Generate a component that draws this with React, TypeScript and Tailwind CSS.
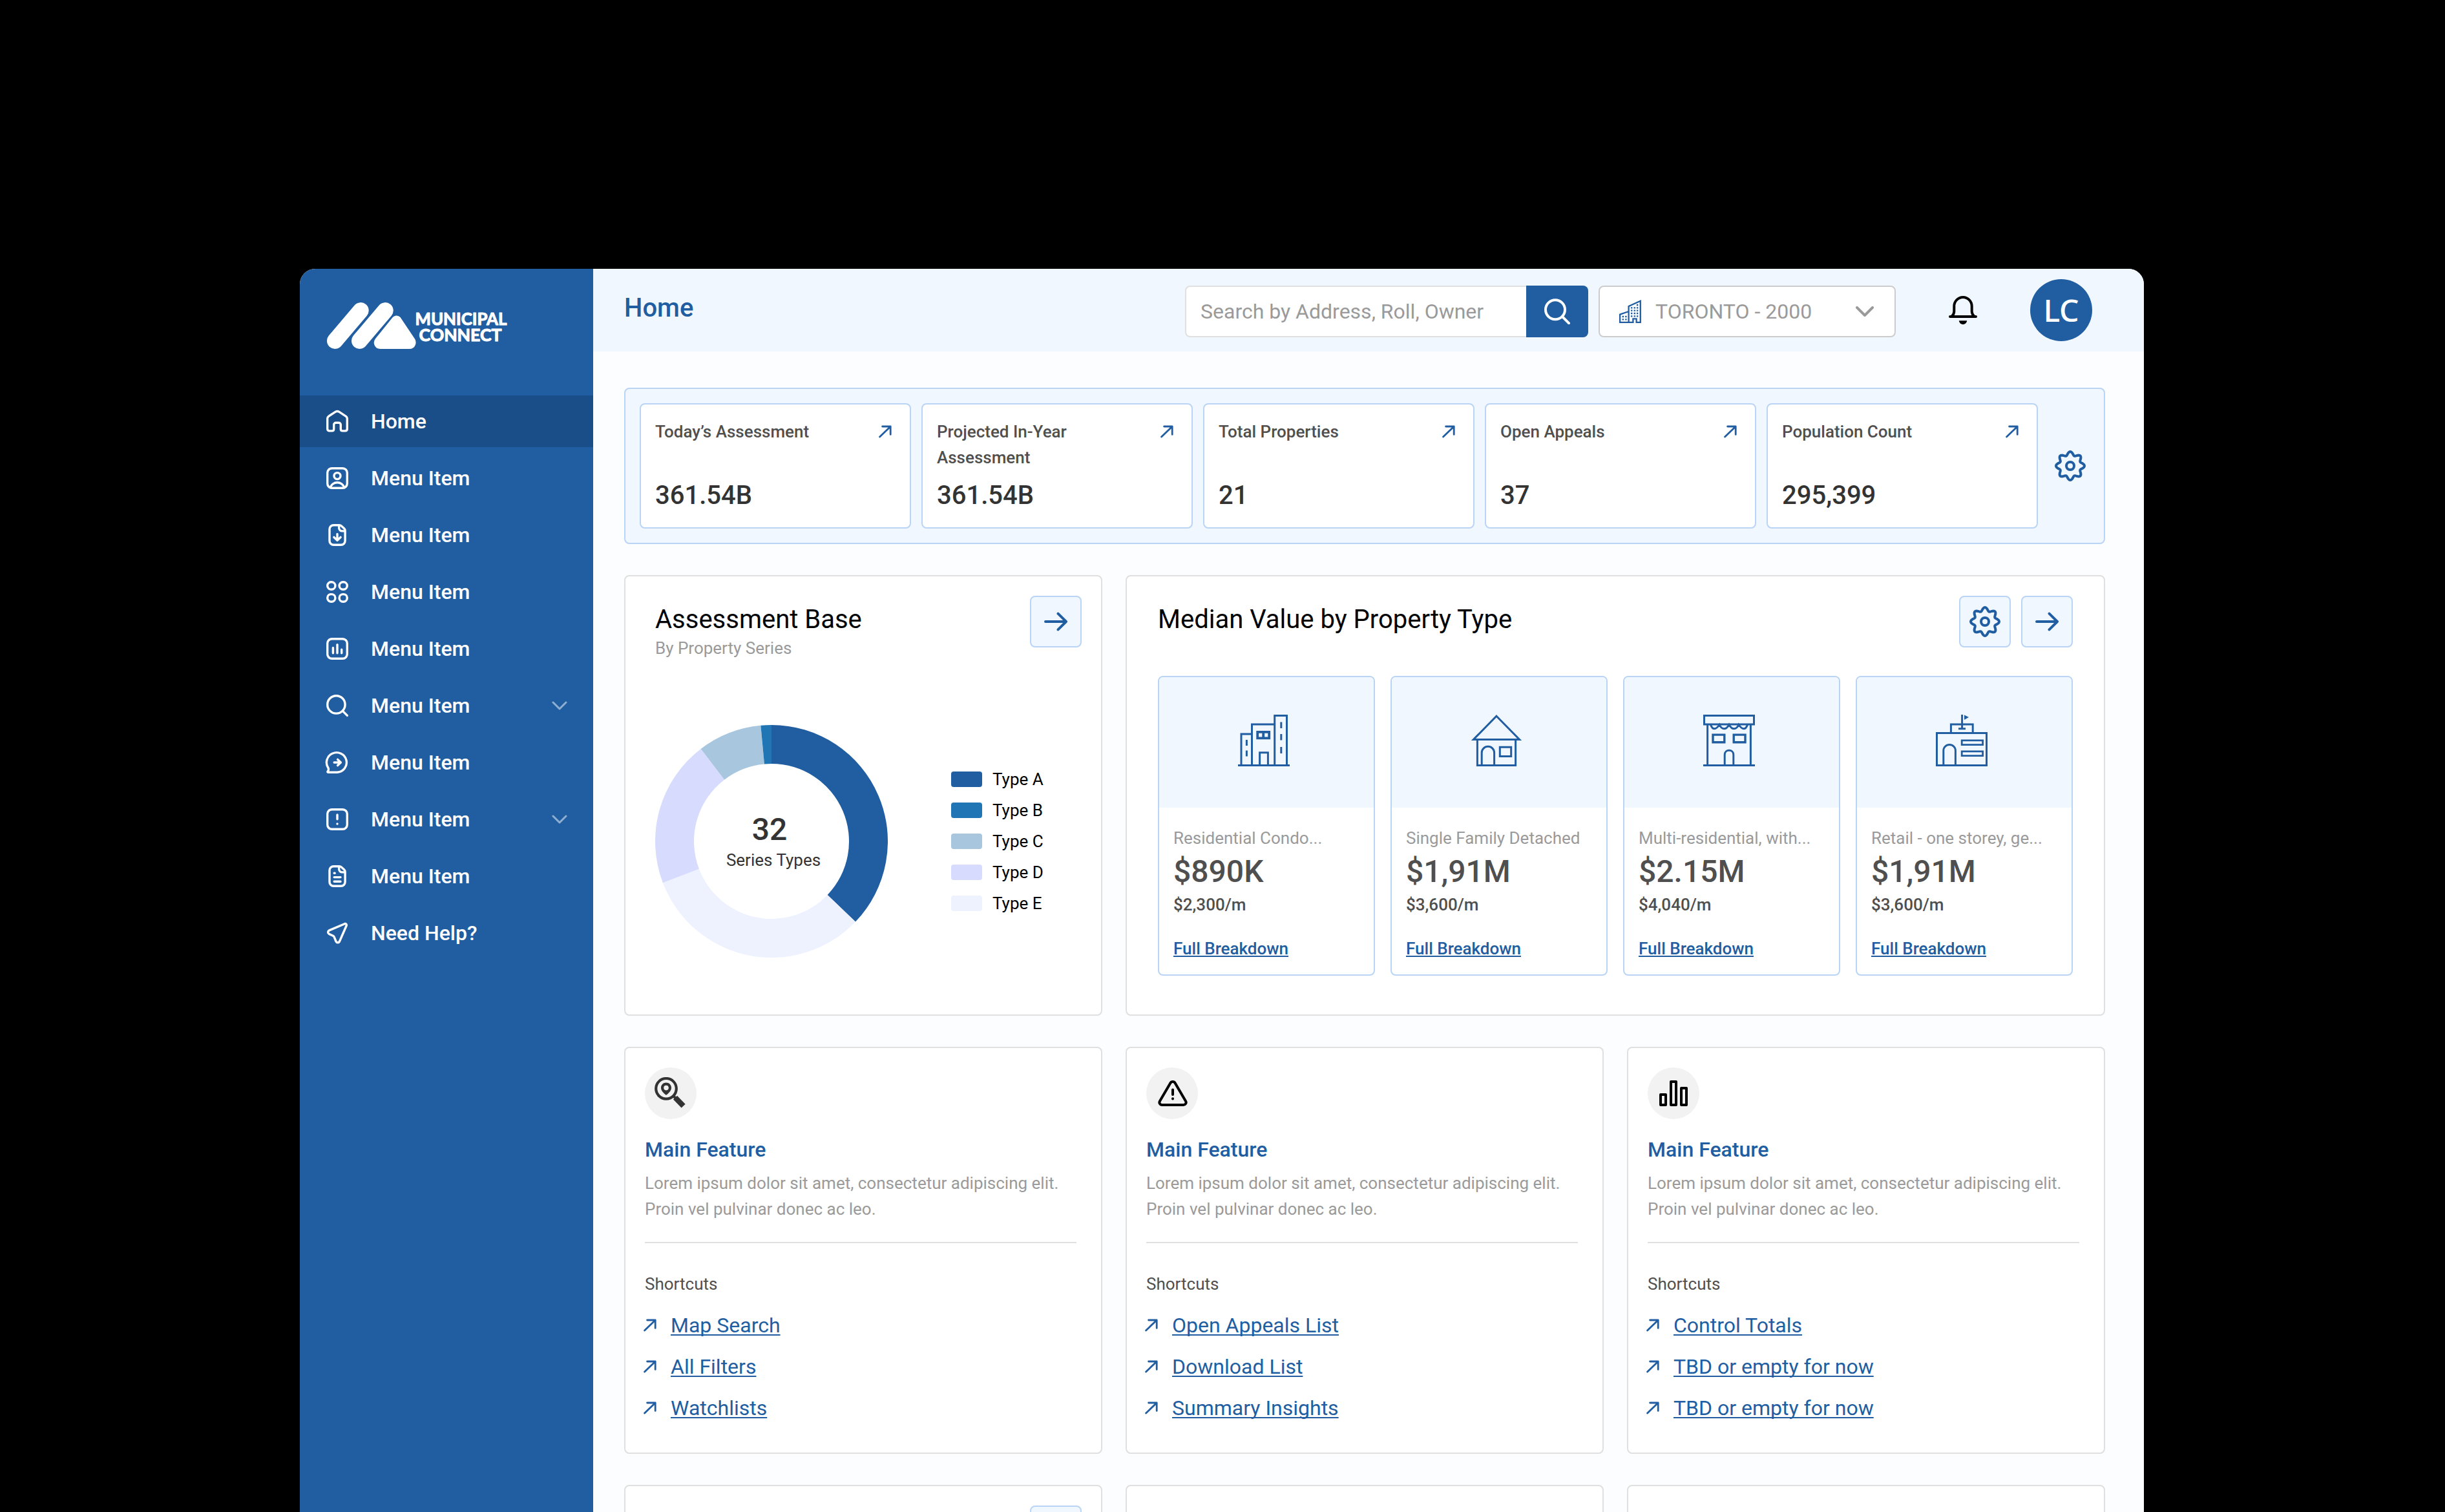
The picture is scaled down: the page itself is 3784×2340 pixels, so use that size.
import type { ReactNode } from 'react';
import { clsx } from 'clsx';

interface MenuEntry {
  label: string;
  icon: ReactNode;
  active?: boolean;
  expandable?: boolean;
}

interface Stat {
  label: string;
  value: string;
}

interface PropertyType {
  label: string;
  value: string;
  perMonth: string;
  icon: ReactNode;
}

interface Feature {
  icon: ReactNode;
  shortcuts: string[];
}

function MenuIcon({ children }: { children: ReactNode }) {
  return (
    <svg className="w-10 h-10 shrink-0" viewBox="0 0 40 40" fill="none" stroke="currentColor" strokeWidth="3.4" strokeLinecap="round" strokeLinejoin="round">
      {children}
    </svg>
  );
}

const FILE_OUTLINE = 'M14.3 4.7h8.6c1.4 0 2.5.4 3.5 1.3l4.1 3.8c1 1 1.6 2.1 1.6 3.4V29c0 3.5-2.8 6.3-6.3 6.3H14.3C10.8 35.3 8 32.5 8 29V11c0-3.5 2.8-6.3 6.3-6.3z';

const menu: MenuEntry[] = [
  {
    label: 'Home',
    active: true,
    icon: (
      <path d="M4.7 15.8c0-1.4.7-2.7 1.8-3.5l10.6-6.9c1.8-1.1 4-1.1 5.8 0l10.6 6.9c1.1.8 1.8 2.1 1.8 3.5v16c0 1.8-1.3 3.1-3.1 3.1h-4c-1.7 0-2.9-1.2-2.9-2.9v-6.7c0-1.7-1.3-3-3-3h-4.6c-1.7 0-3 1.3-3 3V32c0 1.7-1.2 2.9-2.9 2.9h-4c-1.8 0-3.1-1.3-3.1-3.1z" />
    ),
  },
  {
    label: 'Menu Item',
    icon: (
      <>
        <rect x="4.7" y="4.7" width="30.6" height="30.6" rx="7" />
        <circle cx="20" cy="16.6" r="5" />
        <path d="M9.2 34.4c1.6-4.6 5.8-7.7 10.8-7.7s9.2 3.1 10.8 7.7" />
      </>
    ),
  },
  {
    label: 'Menu Item',
    icon: (
      <>
        <path d={FILE_OUTLINE} />
        <path d="M22.6 5.2v3.6c0 2.9 2.2 5.1 5.1 5.1h4" />
        <path d="M20 18.4v9.4M14.9 23.4l5.1 4.8 5.1-4.8" />
      </>
    ),
  },
  {
    label: 'Menu Item',
    icon: (
      <>
        <rect x="4.7" y="4.7" width="12.2" height="11.6" rx="5.8" />
        <rect x="23.1" y="4.7" width="12.2" height="11.6" rx="5.8" />
        <rect x="4.7" y="23.6" width="12.2" height="11.6" rx="5.8" />
        <rect x="23.1" y="23.6" width="12.2" height="11.6" rx="5.8" />
      </>
    ),
  },
  {
    label: 'Menu Item',
    icon: (
      <>
        <rect x="4.7" y="4.7" width="30.6" height="30.6" rx="7" />
        <path d="M13.4 18.4v8.4M20 13.6v13.2M26.7 21.3v5.5" />
      </>
    ),
  },
  {
    label: 'Menu Item',
    expandable: true,
    icon: (
      <>
        <circle cx="18.4" cy="18.4" r="13.7" />
        <path d="M28.4 28.4l7 7" />
      </>
    ),
  },
  {
    label: 'Menu Item',
    icon: (
      <>
        <path d="M20 35.3H5.7c-.7 0-1-.7-.6-1.2 1.5-1.8 1.9-3.2.9-5.6A15.5 15.3 0 1 1 20 35.3z" />
        <path d="M15.2 20h9.8M20.6 15.4l4.8 4.6-4.8 4.6" />
      </>
    ),
  },
  {
    label: 'Menu Item',
    expandable: true,
    icon: (
      <>
        <rect x="4.7" y="4.7" width="30.6" height="30.6" rx="7" />
        <path d="M20 13v6.8M20 26.9v.1" />
      </>
    ),
  },
  {
    label: 'Menu Item',
    icon: (
      <>
        <path d={FILE_OUTLINE} />
        <path d="M22.6 5.2v3.6c0 2.9 2.2 5.1 5.1 5.1h4" />
        <path d="M15.2 15.2h1M15.2 21.6h9.8M15.2 28.2h9.8" />
      </>
    ),
  },
  {
    label: 'Need Help?',
    icon: (
      <path d="M31.4 5.7L7.5 15.9c-2.4 1-2.5 4.3-.1 5.5l6 2.9c.8.4 1.4 1 1.8 1.8l2.8 6.9c1.1 2.4 4.5 2.4 5.5-.1L34.2 8.5c.7-1.8-1-3.5-2.8-2.8z" />
    ),
  },
];

const stats: Stat[] = [
  { label: 'Today’s Assessment', value: '361.54B' },
  { label: 'Projected In-Year Assessment', value: '361.54B' },
  { label: 'Total Properties', value: '21' },
  { label: 'Open Appeals', value: '37' },
  { label: 'Population Count', value: '295,399' },
];

// Slices run clockwise from the top, angles in degrees
const slices = [
  { color: '#215ea1', from: 0, to: 133.8 },
  { color: '#eef2fe', from: 133.8, to: 249.1 },
  { color: '#d7dcff', from: 249.1, to: 322.6 },
  { color: '#a8c6de', from: 322.6, to: 354.7 },
  { color: '#2076b4', from: 354.7, to: 360 },
];

const legend = [
  { label: 'Type A', swatch: 'bg-[#215ea1]' },
  { label: 'Type B', swatch: 'bg-[#2076b4]' },
  { label: 'Type C', swatch: 'bg-[#a8c6de]' },
  { label: 'Type D', swatch: 'bg-[#d7dcff]' },
  { label: 'Type E', swatch: 'bg-[#eef2fe]' },
];

const propertyTypes: PropertyType[] = [
  {
    label: 'Residential Condo...',
    value: '$890K',
    perMonth: '$2,300/m',
    icon: (
      <>
        <path d="M0 78.5h80M5 78.5V30h16.5M21.5 78.5V15h35M56.7 78.5v-77h18.8v77" />
        <path d="M13.4 39v9M13.4 55.5v9M66.8 11.5v9.5M66.8 30v9.5M66.8 50v10" />
        <path d="M30.2 26.8h18v9.6h-18zM39.2 26.8v9.6" strokeWidth="3.8" />
        <path d="M33.6 78.5V58.8h12.8v19.7" />
      </>
    ),
  },
  {
    label: 'Single Family Detached',
    value: '$1,91M',
    perMonth: '$3,600/m',
    icon: (
      <>
        <path d="M40 2.2L75.6 38.5H4.4zM10.4 38.5v40h59.2v-40" />
        <path d="M17.2 78.5V59c0-5.4 4.3-9.7 9.7-9.7s9.7 4.3 9.7 9.7v19.5" />
        <path d="M45.3 50.3h17.4v14.2H45.3z" />
      </>
    ),
  },
  {
    label: 'Multi-residential, with...',
    value: '$2.15M',
    perMonth: '$4,040/m',
    icon: (
      <>
        <path d="M1.5 1.5h77V15h-77zM6.6 15v63.5M73.4 15v63.5M0 78.5h80" />
        <path d="M11.5 15.5c1.2 3.8 3.2 6.3 6 6.3s5-2.5 7.6-6.3c1.6 3.8 4 6.3 7.2 6.3s5.6-2.5 7.7-6.3c2.1 3.8 4.5 6.3 7.7 6.3s5.6-2.5 7.2-6.3c2.6 3.8 4.8 6.3 7.6 6.3s4.8-2.5 6-6.3" />
        <path d="M15 31.1h17.8v11.7H15zM47.2 31.1H65v11.7H47.2z" strokeWidth="3.4" />
        <path d="M33.2 78.5V62c0-4 3-6.8 6.8-6.8s6.8 2.8 6.8 6.8v16.5" />
      </>
    ),
  },
  {
    label: 'Retail - one storey, ge...',
    value: '$1,91M',
    perMonth: '$3,600/m',
    icon: (
      <>
        <path d="M1.5 28.6h77v49.9h-77zM23.4 28.6V15h33.8v13.6" />
        <path d="M40.6 0v22M35 21.8h11" />
        <path d="M44 .5l7 3.5-7 4z" fill="currentColor" stroke="none" />
        <path d="M11.8 78.5V55.6c0-5 4-9 9.3-9s9.3 4 9.3 9v22.9" />
        <path d="M40.2 39.8h32.4v6.8H40.2zM40.2 56.8h32.4v6.8H40.2z" strokeWidth="2.8" />
      </>
    ),
  },
];

const features: Feature[] = [
  {
    icon: (
      <svg className="w-12 h-12 -mt-0.5 -ml-0.5 text-[#333333]" viewBox="0 0 48 48" fill="none" stroke="currentColor">
        <circle cx="18" cy="17.8" r="15.8" strokeWidth="4.2" />
        <path d="M18 8.6c-4.5 0-8 3.4-8 7.8 0 4.6 4 8.2 8 11.4 4-3.2 8-6.8 8-11.4 0-4.4-3.5-7.8-8-7.8zm0 4.2a3.8 3.8 0 1 1 0 7.6 3.8 3.8 0 0 1 0-7.6z" fill="currentColor" stroke="none" fillRule="evenodd" />
        <path d="M28.5 28.5l4 4" strokeWidth="4" />
        <path d="M32 31.6l12.6 13" strokeWidth="8.4" />
      </svg>
    ),
    shortcuts: ['Map Search', 'All Filters', 'Watchlists'],
  },
  {
    icon: (
      <svg className="w-[46px] h-10 ml-0.5" viewBox="0 0 46 40" fill="none" stroke="currentColor" strokeWidth="4" strokeLinecap="round" strokeLinejoin="round">
        <path d="M19.3 4.3c1.7-3 5.7-3 7.4 0l16.4 27.9c1.5 2.6-.4 5.8-3.5 5.8H6.4c-3.1 0-5-3.2-3.5-5.8z" />
        <path d="M23 14.6V22M23 28.3v.1" />
      </svg>
    ),
    shortcuts: ['Open Appeals List', 'Download List', 'Summary Insights'],
  },
  {
    icon: (
      <svg className="w-[46px] h-10" viewBox="0 0 46 40" fill="none" stroke="currentColor" strokeWidth="4" strokeLinejoin="round">
        <path d="M3 22h8v16H3zM19 2h8v36h-8zM35 12h8v26h-8z" />
      </svg>
    ),
    shortcuts: ['Control Totals', 'TBD or empty for now', 'TBD or empty for now'],
  },
];

function polar(radius: number, degrees: number) {
  const rad = (degrees * Math.PI) / 180;
  return `${(180 + radius * Math.sin(rad)).toFixed(2)} ${(180 - radius * Math.cos(rad)).toFixed(2)}`;
}

function slicePath(from: number, to: number) {
  const large = to - from > 180 ? 1 : 0;
  return `M${polar(180, from)}A180 180 0 ${large} 1 ${polar(180, to)}L${polar(120, to)}A120 120 0 ${large} 0 ${polar(120, from)}z`;
}

// Eight-lobed cog outline around (24, 24)
const cogPath = `M${Array.from({ length: 180 }, (_, i) => {
  const a = (i * Math.PI) / 90;
  const r = 19.3 + 2.7 * Math.cos(8 * a);
  return `${(24 + r * Math.cos(a)).toFixed(2)} ${(24 + r * Math.sin(a)).toFixed(2)}`;
}).join('L')}z`;

function CogIcon() {
  return (
    <svg className="w-12 h-12 shrink-0 text-[#215ea1]" viewBox="0 0 48 48" fill="none" stroke="currentColor" strokeWidth="4" strokeLinejoin="round">
      <path d={cogPath} />
      <circle cx="24" cy="24" r="6" />
    </svg>
  );
}

function ArrowUpRight({ className }: { className?: string }) {
  return (
    <svg className={clsx('w-5 h-5 shrink-0 text-[#215ea1]', className)} viewBox="0 0 20 20" fill="none" stroke="currentColor" strokeWidth="2.8" strokeLinecap="round" strokeLinejoin="round">
      <path d="M1.6 18L18 2.2M5.6 2h12.6v12.4" />
    </svg>
  );
}

function IconButton({ children }: { children: ReactNode }) {
  return (
    <button className="w-20 h-20 flex items-center justify-center rounded-lg border-2 border-[#b9d4f4] bg-[#f0f7ff] text-[#215ea1]">
      {children}
    </button>
  );
}

function ArrowRight() {
  return (
    <svg className="w-[38px] h-[30px]" viewBox="0 0 38 30" fill="none" stroke="currentColor" strokeWidth="4" strokeLinecap="round" strokeLinejoin="round">
      <path d="M3 15h32M22.5 2.6L35 15 22.5 27.4" />
    </svg>
  );
}

function Logo() {
  return (
    <svg className="w-[300px] h-20" viewBox="0 0 300 80" fill="white" stroke="white" strokeLinecap="round" strokeLinejoin="round">
      <path d="M12.5 59.4L52.2 12.6M50.5 59.4L90.2 12.6" strokeWidth="25" />
      <path d="M107.6 28.5l21.6 32.2c.8 1.6.2 3.3-1.6 3.3h-45c-1.8 0-2.3-1.6-1.2-3z" strokeWidth="16" />
      <g stroke="white" strokeWidth="1.1" fontFamily="Lato, sans-serif" fontWeight="700" fontSize="27">
        <text x="136.5" y="34.5" textLength="142" lengthAdjust="spacingAndGlyphs">MUNICIPAL</text>
        <text x="142.5" y="59.5" textLength="128" lengthAdjust="spacingAndGlyphs">CONNECT</text>
      </g>
    </svg>
  );
}

function Sidebar() {
  return (
    <aside className="w-[454px] shrink-0 bg-[#215ea1] text-white">
      <div className="h-[196px] pt-[52px] pl-[42px]">
        <Logo />
      </div>
      <nav className="flex flex-col gap-2">
        {menu.map((item, i) => (
          <a key={i} className={clsx('h-20 pl-[38px] pr-10 flex items-center', item.active && 'bg-[#1a4e88]')}>
            <MenuIcon>{item.icon}</MenuIcon>
            <span className="ml-8 flex-1 text-[32px] leading-10 font-medium">{item.label}</span>
            {item.expandable && (
              <svg className="w-6 h-[14px] text-[#90afd0]" viewBox="0 0 24 14" fill="none" stroke="currentColor" strokeWidth="3" strokeLinecap="round" strokeLinejoin="round">
                <path d="M2 2l10 10L22 2" />
              </svg>
            )}
          </a>
        ))}
      </nav>
    </aside>
  );
}

function Header() {
  return (
    <header className="h-32 pl-12 pr-20 flex items-center bg-[#f0f7ff]">
      <h1 className="-mt-1.5 flex-1 text-[40px] leading-[48px] font-medium text-[#215ea1]">Home</h1>
      <div className="mt-1 flex h-20 w-[624px]">
        <div className="flex-1 pl-[22px] flex items-center rounded-l-lg border-2 border-r-0 border-[#e0e0e0] bg-white text-[32px] text-[#9a9a9a]">
          Search by Address, Roll, Owner
        </div>
        <button className="w-24 flex items-center justify-center rounded-r-lg bg-[#215ea1] text-white">
          <svg className="w-10 h-10" viewBox="0 0 40 40" fill="none" stroke="currentColor" strokeWidth="4" strokeLinecap="round">
            <circle cx="17" cy="17.2" r="15" />
            <path d="M28 28.2l10 10" />
          </svg>
        </button>
      </div>
      <div className="mt-1 ml-4 h-20 w-[460px] pl-[30px] pr-8 flex items-center rounded-lg border-2 border-[#cccccc] bg-white text-[#9a9a9a]">
        <svg className="w-[34px] h-9 text-[#215ea1]" viewBox="0 0 34 36" fill="none" stroke="currentColor" strokeWidth="2.3">
          <path d="M14.6 34.8H1.1V22.6l13.5-4.6M14.6 34.8V10L32.8 1.8v33h-6.2v-5.4h-5.2v5.4z" />
          <path d="M18 12.4h2.4M22.6 12.4H25M18 16.7h2.4M22.6 16.7H25M26.9 16.7h2.4M18 21h2.4M22.6 21H25M26.9 21h2.4M18 25.4h2.4M22.6 25.4H25M26.9 25.4h2.4M26.9 12.4h2.4M26.9 8h2.4M4.6 26H7M9.2 26h2.4M4.6 30.4H7M9.2 30.4h2.4" />
        </svg>
        <span className="ml-[22px] flex-1 text-[32px]">TORONTO - 2000</span>
        <svg className="w-7 h-4" viewBox="0 0 28 16" fill="none" stroke="currentColor" strokeWidth="4" strokeLinecap="round" strokeLinejoin="round">
          <path d="M2 2l12 12L26 2" />
        </svg>
      </div>
      <svg className="ml-[82px] w-11 h-11" viewBox="0 0 44 44" fill="none" stroke="black" strokeWidth="4" strokeLinecap="round" strokeLinejoin="round">
        <path d="M2 32h40M4.8 31.4C7 29.2 8.3 27 8.3 24v-8C8.3 8.3 14.4 2 22 2s13.7 6.3 13.7 14v8c0 3 1.3 5.2 3.5 7.4" />
        <path d="M15.8 38.2h12.4c-.4 3.3-3 5.8-6.2 5.8s-5.8-2.5-6.2-5.8z" fill="black" stroke="none" />
      </svg>
      <div className="ml-[82px] w-24 h-24 flex items-center justify-center rounded-full bg-[#215ea1] font-['Noto_Sans',sans-serif] text-[48px] leading-none font-medium text-white">
        LC
      </div>
    </header>
  );
}

function StatsPanel() {
  return (
    <section className="h-[242px] pl-[22px] pr-7 flex items-center rounded-lg border-2 border-[#b9d4f4] bg-[#f0f7ff]">
      <div className="flex-1 grid grid-cols-5 gap-4">
        {stats.map((stat) => (
          <div key={stat.label} className="h-[194px] pt-[22px] pb-[25px] pl-[22px] pr-7 flex flex-col justify-between rounded-lg border-2 border-[#b9d4f4] bg-white">
            <div className="flex items-start justify-between">
              <p className="w-[260px] text-[26px] leading-10 font-medium text-[#4f4f4f]">{stat.label}</p>
              <ArrowUpRight className="mt-2.5" />
            </div>
            <p className="text-[40px] leading-[48px] font-medium text-[#333333]">{stat.value}</p>
          </div>
        ))}
      </div>
      <div className="ml-[26px]">
        <CogIcon />
      </div>
    </section>
  );
}

function AssessmentBase() {
  return (
    <section className="w-[740px] h-[682px] pt-[30px] pl-[46px] pr-[30px] rounded-lg border-2 border-[#e0e0e0] bg-white">
      <div className="flex justify-between">
        <div className="pt-[13px]">
          <h2 className="text-[40px] leading-[48px] text-black">Assessment Base</h2>
          <p className="mt-1 text-[26px] leading-8 text-[#9a9a9a]">By Property Series</p>
        </div>
        <IconButton>
          <ArrowRight />
        </IconButton>
      </div>
      <div className="mt-[103px] flex items-center">
        <svg className="w-[360px] h-[360px]" viewBox="0 0 360 360">
          {slices.map((slice) => (
            <path key={slice.color} d={slicePath(slice.from, slice.to)} fill={slice.color} />
          ))}
          <text x="177" y="178" textAnchor="middle" fontSize="48" fontWeight="500" fill="#333333">32</text>
          <text x="183" y="218" textAnchor="middle" fontSize="26" fill="#333333">Series Types</text>
        </svg>
        <ul className="ml-[98px] flex flex-col gap-4">
          {legend.map((item) => (
            <li key={item.label} className="h-8 flex items-center gap-4 text-[26px] text-black">
              <span className={clsx('w-12 h-6 rounded', item.swatch)} />
              {item.label}
            </li>
          ))}
        </ul>
      </div>
    </section>
  );
}

function MedianValue() {
  return (
    <section className="flex-1 h-[682px] pt-[30px] px-12 rounded-lg border-2 border-[#e0e0e0] bg-white">
      <div className="flex justify-between">
        <h2 className="pt-[13px] text-[40px] leading-[48px] text-black">Median Value by Property Type</h2>
        <div className="flex gap-4">
          <IconButton>
            <CogIcon />
          </IconButton>
          <IconButton>
            <ArrowRight />
          </IconButton>
        </div>
      </div>
      <div className="mt-11 grid grid-cols-4 gap-6">
        {propertyTypes.map((type) => (
          <div key={type.label} className="h-[464px] rounded-lg border-2 border-[#b9d4f4] overflow-hidden bg-white">
            <div className="h-[202px] pt-[58px] pr-2 flex justify-center bg-[#f0f7ff]">
              <svg className="w-20 h-20 text-[#215ea1]" viewBox="0 0 80 80" fill="none" stroke="currentColor" strokeWidth="3">
                {type.icon}
              </svg>
            </div>
            <div className="pt-[27px] pl-[22px]">
              <p className="text-[26px] leading-10 text-[#9a9a9a]">{type.label}</p>
              <p className="mt-1 text-[48px] leading-[56px] font-medium text-[#4f4f4f]">{type.value}</p>
              <p className="mt-[7px] text-[26px] leading-8 font-medium text-[#4f4f4f]">{type.perMonth}</p>
              <a className="mt-8 block text-[26px] leading-10 font-medium text-[#215ea1] underline decoration-2 underline-offset-2 [text-decoration-skip-ink:none]">
                Full Breakdown
              </a>
            </div>
          </div>
        ))}
      </div>
    </section>
  );
}

function FeatureCard({ icon, shortcuts }: Feature) {
  return (
    <section className="h-[630px] pt-[30px] pl-[30px] pr-[38px] rounded-lg border-2 border-[#e0e0e0] bg-white">
      <div className="w-20 h-20 flex items-center justify-center rounded-full bg-[#f2f2f2] text-black">{icon}</div>
      <h3 className="mt-[23px] text-[32px] leading-[48px] font-medium text-[#215ea1]">Main Feature</h3>
      <p className="mt-2 text-[26px] leading-10 text-[#9a9a9a]">
        Lorem ipsum dolor sit amet, consectetur adipiscing elit. Proin vel pulvinar donec ac leo.
      </p>
      <hr className="mt-[31px] border-t-2 border-[#e0e0e0]" />
      <p className="mt-[47px] text-[26px] leading-8 text-[#4f4f4f]">Shortcuts</p>
      <ul className="mt-7 flex flex-col gap-6">
        {shortcuts.map((label, i) => (
          <li key={i} className="flex items-center">
            <ArrowUpRight className="-ml-0.5" />
            <a className="ml-[22px] text-[32px] leading-10 text-[#215ea1] underline decoration-2 underline-offset-3 [text-decoration-skip-ink:none]">
              {label}
            </a>
          </li>
        ))}
      </ul>
    </section>
  );
}

export default function App() {
  return (
    <div className="w-[3784px] h-[2340px] pt-[416px] pl-[464px] overflow-hidden bg-black font-['Roboto',sans-serif]">
      <div className="w-[2854px] h-[1924px] flex rounded-t-[24px] overflow-hidden bg-[#fcfdff]">
        <Sidebar />
        <div className="flex-1">
          <Header />
          <main className="pt-14 pl-12 pr-[60px] flex flex-col gap-12">
            <StatsPanel />
            <div className="flex gap-9">
              <AssessmentBase />
              <MedianValue />
            </div>
            <div className="grid grid-cols-3 gap-9">
              {features.map((feature, i) => (
                <FeatureCard key={i} {...feature} />
              ))}
            </div>
            <div className="grid grid-cols-3 gap-9">
              <section className="h-[630px] pt-[30px] pr-[30px] flex justify-end rounded-lg border-2 border-[#e0e0e0] bg-white">
                <IconButton>
                  <ArrowRight />
                </IconButton>
              </section>
              <section className="h-[630px] rounded-lg border-2 border-[#e0e0e0] bg-white" />
              <section className="h-[630px] rounded-lg border-2 border-[#e0e0e0] bg-white" />
            </div>
          </main>
        </div>
      </div>
    </div>
  );
}
